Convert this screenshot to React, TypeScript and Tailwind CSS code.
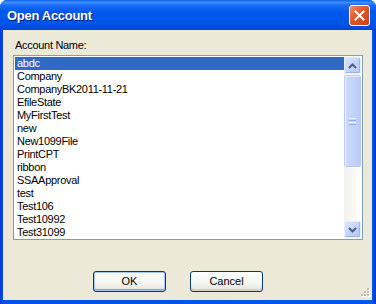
import React, { useState } from 'react';

const accounts = [
  'abdc',
  'Company',
  'CompanyBK2011-11-21',
  'EfileState',
  'MyFirstTest',
  'new',
  'New1099File',
  'PrintCPT',
  'ribbon',
  'SSAApproval',
  'test',
  'Test106',
  'Test10992',
  'Test31099',
];

function Chevron({ up }: { up?: boolean }) {
  return (
    <svg width="9" height="6" viewBox="0 0 9 6">
      <polyline
        points={up ? '1,5 4.5,1.5 8,5' : '1,1 4.5,4.5 8,1'}
        fill="none"
        stroke="#4d6185"
        strokeWidth="2"
      />
    </svg>
  );
}

function ScrollButton({ up }: { up?: boolean }) {
  return (
    <div className="h-[17px] w-[17px] rounded-[2px] border border-[#e6eefc] bg-[linear-gradient(135deg,#dce7fd_0%,#c4d5fc_50%,#b4c8f6_100%)] flex items-center justify-center shadow-[inset_-1px_-1px_0_#9db6ec]">
      <Chevron up={up} />
    </div>
  );
}

function Scrollbar() {
  return (
    <div className="w-[17px] h-full flex flex-col bg-[linear-gradient(90deg,#f3f1ec_0%,#fefefb_100%)]">
      <ScrollButton up />
      <div className="mt-px h-[92px] rounded-[2px] border border-[#b8cbf5] bg-[linear-gradient(90deg,#cbdafc_0%,#c4d4fb_50%,#b8cbf7_100%)] flex flex-col items-center justify-center gap-px shadow-[inset_1px_1px_0_#e8effe]">
        <div className="w-[7px] h-px bg-[#eef4fe]" />
        <div className="w-[7px] h-px bg-[#8cabf0]" />
        <div className="w-[7px] h-px bg-[#eef4fe]" />
        <div className="w-[7px] h-px bg-[#8cabf0]" />
      </div>
      <div className="flex-1" />
      <ScrollButton />
    </div>
  );
}

function XpButton({ label, isDefault }: { label: string; isDefault?: boolean }) {
  return (
    <button
      className={
        'w-[73px] h-[21px] rounded-[3px] border border-[#003c74] bg-[linear-gradient(180deg,#ffffff_0%,#f4f4f0_60%,#e3e2da_100%)] text-[11px] text-black flex items-center justify-center ' +
        (isDefault ? 'shadow-[inset_0_0_0_1px_#a9c6f3,inset_0_-1px_0_1px_#7ba2e7]' : 'shadow-[inset_0_-2px_0_#d6d0c5]')
      }
    >
      {label}
    </button>
  );
}

export default function App() {
  const [selected, setSelected] = useState('abdc');

  return (
    <div
      className="w-[376px] h-[304px] flex flex-col rounded-t-[7px] bg-[linear-gradient(90deg,#0839d6_0%,#0052e8_1%,#0056ec_99%,#0033c2_100%)] overflow-hidden"
      style={{ fontFamily: '"Liberation Sans", Arial, sans-serif' }}
    >
      {/* title bar */}
      <div className="h-[30px] shrink-0 flex items-center pl-[7px] pr-[6px] bg-[linear-gradient(180deg,#0a5fe8_0%,#3d8ffd_8%,#1a6bf6_18%,#0058ee_40%,#0055e8_80%,#0046d6_100%)]">
        <span className="text-white font-bold text-[13px] tracking-[-0.3px] mt-[1px] [text-shadow:1px_1px_0_#0a1f7a]">
          Open Account
        </span>
        <div className="ml-auto w-[21px] h-[21px] rounded-[3px] border border-white bg-[linear-gradient(135deg,#f08a62_0%,#e1572b_45%,#c8411a_100%)] flex items-center justify-center">
          <svg width="11" height="11" viewBox="0 0 11 11">
            <path d="M1.5 1.5 L9.5 9.5 M9.5 1.5 L1.5 9.5" stroke="white" strokeWidth="2" strokeLinecap="square" />
          </svg>
        </div>
      </div>

      {/* client */}
      <div className="flex-1 flex pl-[3px] pr-[4px] pb-[4px]">
        <div className="relative flex-1 bg-[#ece9d8] flex flex-col pl-[10px] pt-[8px] tracking-[-0.3px] text-[11px]">
          <div className="h-[13px] leading-[13px] pl-[2px] mt-px text-black">Account Name:</div>
          <div className="mt-[3px] w-[350px] h-[185px] border border-[#7f9db9] bg-white p-px flex">
            <div className="flex-1 overflow-hidden">
              {accounts.map((name) => (
                <div
                  key={name}
                  onClick={() => setSelected(name)}
                  className={
                    'h-[13px] leading-[13px] pl-[2px] ' +
                    (selected === name ? 'bg-[#316ac5] text-white' : 'text-black')
                  }
                >
                  {name}
                </div>
              ))}
            </div>
            <Scrollbar />
          </div>

          <div className="mt-[31px] ml-[80px] flex gap-[24px] tracking-normal">
            <XpButton label="OK" isDefault />
            <XpButton label="Cancel" />
          </div>

          {/* size grip */}
          <svg className="absolute right-[2px] bottom-[2px]" width="10" height="10" viewBox="0 0 10 10">
            {[
              [8, 0], [8, 3], [5, 3], [8, 6], [5, 6], [2, 6],
            ].map(([x, y]) => (
              <g key={`${x}-${y}`}>
                <rect x={x} y={y + 1} width="2" height="2" fill="#fff" />
                <rect x={x - 1} y={y} width="2" height="2" fill="#c3bfae" />
              </g>
            ))}
          </svg>
        </div>
      </div>
    </div>
  );
}
